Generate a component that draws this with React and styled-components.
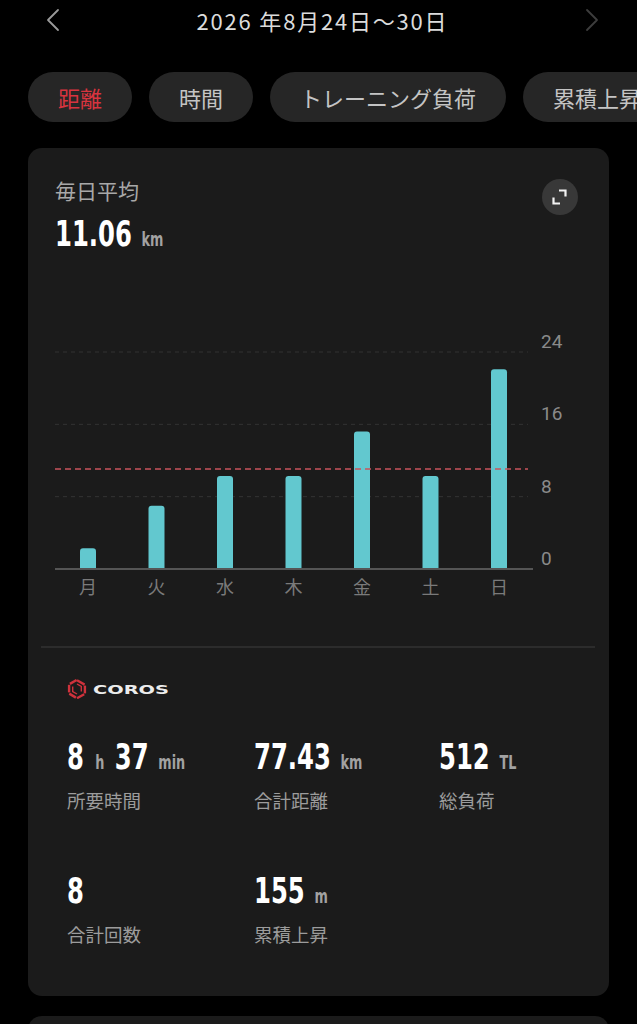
import React from "react";
import styled, { createGlobalStyle } from "styled-components";

const GlobalStyle = createGlobalStyle`
  html, body { margin: 0; padding: 0; background: #000; }
  body { font-family: "Noto Sans CJK JP", "Noto Sans", sans-serif; color: #fff; }
  * { box-sizing: border-box; }
`;

const NUM_FONT = `"DejaVu Sans Condensed", "Liberation Sans", sans-serif`;

const Page = styled.div`
  width: 637px;
  height: 1024px;
  overflow: hidden;
  background: #000;
`;

const TopBar = styled.header`
  height: 40px;
  display: flex;
  align-items: center;
  justify-content: space-between;
  padding: 0 36px 0 44px;
`;

const NavButton = styled.div`
  width: 18px;
  height: 26px;
  display: flex;
  align-items: center;
  justify-content: center;
  color: ${(p) => (p.$dim ? "#3d3d3d" : "#9a9a9a")};
`;

const DateTitle = styled.div`
  font-size: 22px;
  line-height: 40px;
  color: #dcdcdc;
  letter-spacing: 1.8px;
`;

const Tabs = styled.nav`
  margin-top: 32px;
  display: flex;
  gap: 17px;
  padding-left: 28px;
  white-space: nowrap;
  overflow: hidden;
`;

const Tab = styled.div`
  flex: none;
  height: 50px;
  border-radius: 25px;
  padding: 0 30px;
  display: flex;
  align-items: center;
  background: #262626;
  font-size: 22px;
  color: ${(p) => (p.$active ? "#d8343f" : "#c4c4c4")};
`;

const Card = styled.section`
  margin: ${(p) => p.$mt || 26}px 28px 0;
  background: #1b1b1b;
  border-radius: 14px;
  padding-bottom: ${(p) => p.$pb || 0}px;
  height: ${(p) => (p.$h ? p.$h + "px" : "auto")};
`;

const CardHead = styled.div`
  display: flex;
  justify-content: space-between;
  align-items: flex-start;
  padding: 28px 31px 0 27px;
`;

const HeadText = styled.div`
  display: flex;
  flex-direction: column;
  gap: 10px;
`;

const CardTitle = styled.div`
  font-size: 21px;
  line-height: 28px;
  color: #a8a8a8;
`;

const ValueLine = styled.div`
  display: flex;
  align-items: baseline;
  height: 40px;
  transform: scaleX(0.75);
  transform-origin: left center;
`;

const BigNum = styled.span`
  font-family: ${NUM_FONT};
  font-weight: 700;
  font-size: 36px;
  line-height: 40px;
  color: #fff;
`;

const Unit = styled.span`
  font-family: ${NUM_FONT};
  font-weight: 700;
  font-size: 19px;
  color: #a2a2a2;
  margin: 0 ${(p) => p.$mr || 0}px 0 ${(p) => p.$ml || 12}px;
`;

const ExpandButton = styled.div`
  margin-top: 3px;
  width: 36px;
  height: 36px;
  border-radius: 50%;
  background: #383838;
  display: flex;
  align-items: center;
  justify-content: center;
`;

const ChartWrap = styled.div`
  margin-top: 71px;
  padding-left: 27px;
`;

const Divider = styled.div`
  margin: 31px 14px 0 13px;
  height: 2px;
  background: #2c2c2c;
`;

const LogoRow = styled.div`
  margin-top: 31px;
  padding-left: 39px;
  height: 20px;
  display: flex;
  align-items: center;
  gap: 6px;
`;

const StatsGrid = styled.div`
  margin-top: 38px;
  padding-left: 39px;
  display: grid;
  grid-template-columns: 187px 185px 150px;
  row-gap: 58px;
`;

const Stat = styled.div`
  display: flex;
  flex-direction: column;
  gap: 10px;
`;

const StatLabel = styled.div`
  font-size: 18.5px;
  line-height: 26px;
  color: #9c9c9c;
`;

const ChevronLeft = () => (
  <svg width="14" height="24" viewBox="0 0 14 24" fill="none">
    <path d="M12 2 L2 12 L12 22" stroke="currentColor" strokeWidth="1.8" strokeLinecap="round" strokeLinejoin="round" />
  </svg>
);

const ChevronRight = () => (
  <svg width="14" height="24" viewBox="0 0 14 24" fill="none">
    <path d="M2 2 L12 12 L2 22" stroke="currentColor" strokeWidth="1.8" strokeLinecap="round" strokeLinejoin="round" />
  </svg>
);

const ExpandIcon = () => (
  <svg width="18" height="18" viewBox="0 0 18 18" fill="none">
    <path d="M8 2.5 H14.5 V8.5" stroke="#f2f2f2" strokeWidth="2.2" />
    <path d="M2.5 9.5 V15.5 H9" stroke="#f2f2f2" strokeWidth="2.2" />
  </svg>
);

const CorosMark = () => (
  <svg width="20" height="20" viewBox="0 0 20 20" fill="none">
    <g stroke="#cf323c" strokeWidth="2.4" strokeLinecap="butt">
      <path d="M10 1.2 L17.6 5.6" />
      <path d="M17.9 6.6 V14.4" />
      <path d="M17.2 15.2 L10 19.2" />
      <path d="M8.9 18.6 L2.3 14.6" />
      <path d="M2.1 13.4 V5.8" />
      <path d="M2.9 4.9 L9.6 1.0" />
    </g>
    <g stroke="#cf323c" strokeWidth="1.4">
      <path d="M10 5 L14.3 7.5 V12.5" />
      <path d="M10 15 L5.7 12.5 V7.5" />
    </g>
  </svg>
);

const CorosWord = () => (
  <svg width="76" height="12" viewBox="0 0 76 12">
    <text
      x="0"
      y="10.5"
      fill="#ececec"
      fontFamily="DejaVu Sans, sans-serif"
      fontWeight="600"
      fontSize="12"
      textLength="76"
      lengthAdjust="spacingAndGlyphs"
    >
      COROS
    </text>
  </svg>
);

const days = ["月", "火", "水", "木", "金", "土", "日"];
const values = [2.3, 7.0, 10.3, 10.3, 15.2, 10.3, 22.1];
const AVG = 11.06;

const BarChart = () => {
  const base = 244;
  const step = 72.33;
  const perUnit = step / 8;
  const grid = [24, 16, 8];
  const yFor = (v) => base - v * perUnit;
  return (
    <svg width="527" height="285" viewBox="0 0 527 285">
      {grid.map((g) => (
        <line key={g} x1="0" x2="473" y1={yFor(g)} y2={yFor(g)} stroke="#333" strokeWidth="1" strokeDasharray="4 4" />
      ))}
      {[24, 16, 8, 0].map((g) => (
        <text key={g} x="486" y={yFor(g) - 4} fill="#8a8a8a" fontSize="19" fontFamily="Roboto, sans-serif">
          {g}
        </text>
      ))}
      {values.map((v, i) => {
        const cx = 33 + i * 68.5;
        const top = yFor(v);
        return (
          <path
            key={i}
            d={`M${cx - 8} ${base} V${top + 3} Q${cx - 8} ${top} ${cx - 5} ${top} H${cx + 5} Q${cx + 8} ${top} ${cx + 8} ${top + 3} V${base} Z`}
            fill="#62c8cf"
          />
        );
      })}
      <line x1="0" x2="478" y1={base} y2={base} stroke="#555" strokeWidth="2" />
      <line x1="0" x2="473" y1={yFor(AVG)} y2={yFor(AVG)} stroke="#c9545e" strokeWidth="1.6" strokeDasharray="6 4" />
      {days.map((d, i) => (
        <text
          key={d}
          x={33 + i * 68.5}
          y="269"
          textAnchor="middle"
          fill="#7a7a7a"
          fontSize="18"
          fontFamily="Noto Sans CJK JP, sans-serif"
        >
          {d}
        </text>
      ))}
    </svg>
  );
};

const StatValue = ({ parts }) => (
  <ValueLine>
    {parts.map((p, i) =>
      p.u ? (
        <Unit key={i} $ml={p.ml} $mr={p.mr}>
          {p.u}
        </Unit>
      ) : (
        <BigNum key={i}>{p.n}</BigNum>
      )
    )}
  </ValueLine>
);

const stats = [
  { label: "所要時間", parts: [{ n: "8" }, { u: "h", ml: 15, mr: 14 }, { n: "37" }, { u: "min", ml: 13 }] },
  { label: "合計距離", parts: [{ n: "77.43" }, { u: "km", ml: 13 }] },
  { label: "総負荷", parts: [{ n: "512" }, { u: "TL", ml: 13 }] },
  { label: "合計回数", parts: [{ n: "8" }] },
  { label: "累積上昇", parts: [{ n: "155" }, { u: "m", ml: 13 }] },
];

export default function App() {
  return (
    <Page>
      <GlobalStyle />
      <TopBar>
        <NavButton>
          <ChevronLeft />
        </NavButton>
        <DateTitle>2026 年8月24日～30日</DateTitle>
        <NavButton $dim>
          <ChevronRight />
        </NavButton>
      </TopBar>
      <Tabs>
        <Tab $active>距離</Tab>
        <Tab>時間</Tab>
        <Tab>トレーニング負荷</Tab>
        <Tab>累積上昇</Tab>
      </Tabs>
      <Card $pb={49}>
        <CardHead>
          <HeadText>
            <CardTitle>毎日平均</CardTitle>
            <ValueLine>
              <BigNum>11.06</BigNum>
              <Unit $ml={13}>km</Unit>
            </ValueLine>
          </HeadText>
          <ExpandButton>
            <ExpandIcon />
          </ExpandButton>
        </CardHead>
        <ChartWrap>
          <BarChart />
        </ChartWrap>
        <Divider />
        <LogoRow>
          <CorosMark />
          <CorosWord />
        </LogoRow>
        <StatsGrid>
          {stats.map((s) => (
            <Stat key={s.label}>
              <StatValue parts={s.parts} />
              <StatLabel>{s.label}</StatLabel>
            </Stat>
          ))}
        </StatsGrid>
      </Card>
      <Card $mt={20} $h={200} />
    </Page>
  );
}
